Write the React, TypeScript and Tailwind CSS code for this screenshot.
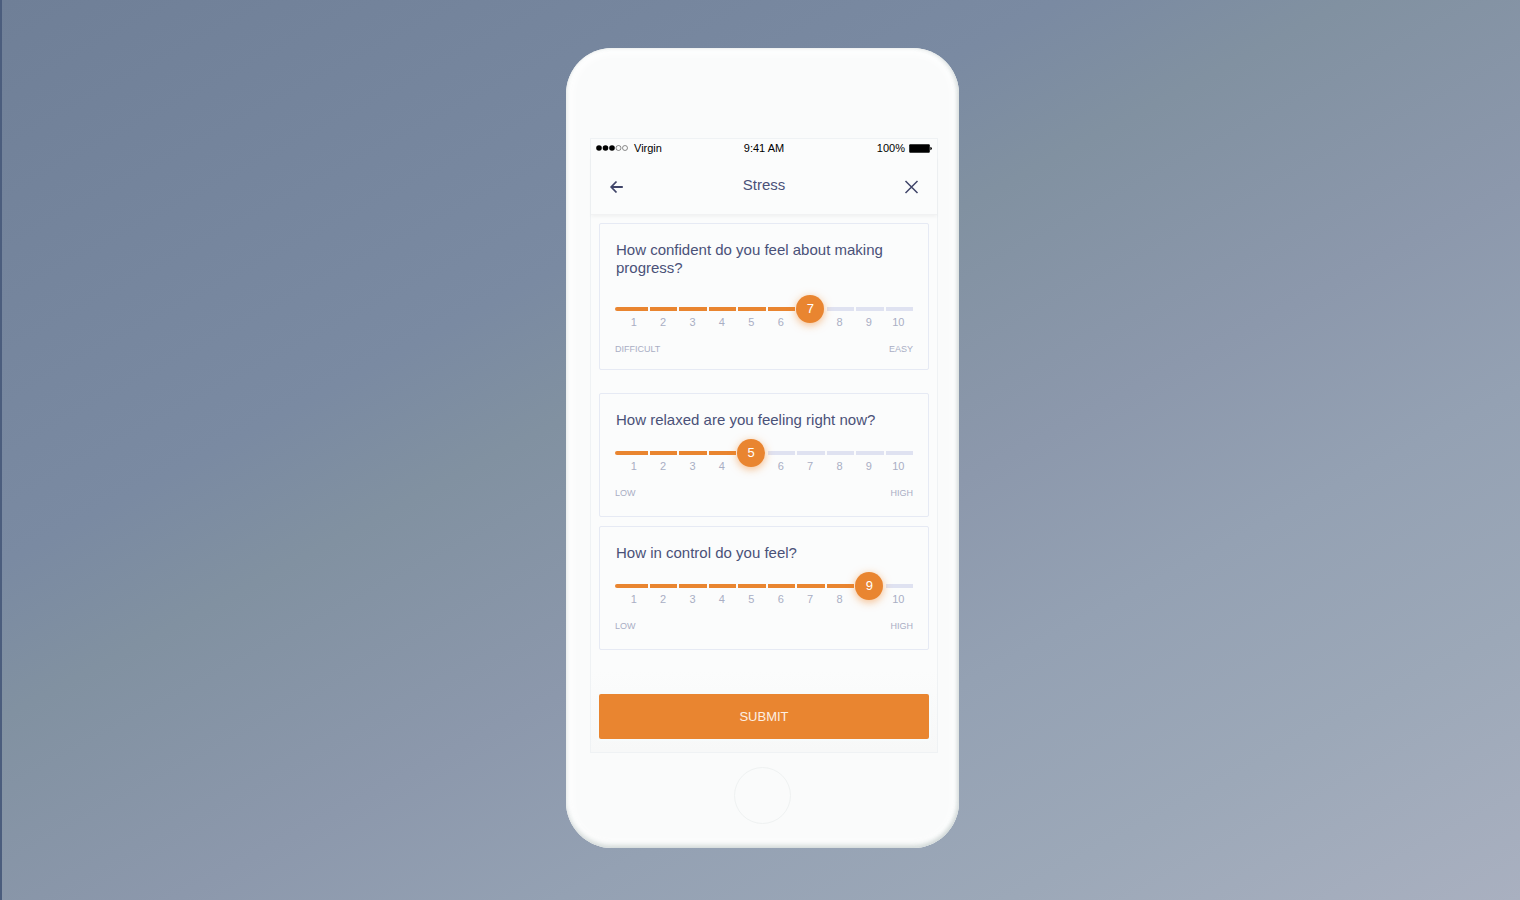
import React, { useState } from 'react';

interface Question {
  id: string;
  title: string;
  value: number;
  low: string;
  high: string;
  cardClass: string;
  trackClass: string;
}

const questions: Question[] = [
  {
    id: 'confident',
    title: 'How confident do you feel about making progress?',
    value: 7,
    low: 'Difficult',
    high: 'Easy',
    cardClass: 'pb-[14px]',
    trackClass: 'mt-[30px]',
  },
  {
    id: 'relaxed',
    title: 'How relaxed are you feeling right now?',
    value: 5,
    low: 'Low',
    high: 'High',
    cardClass: 'mt-[23px] pb-[17px]',
    trackClass: 'mt-[22px]',
  },
  {
    id: 'control',
    title: 'How in control do you feel?',
    value: 9,
    low: 'Low',
    high: 'High',
    cardClass: 'mt-[9px] pb-[17px]',
    trackClass: 'mt-[22px]',
  },
];

const steps = [1, 2, 3, 4, 5, 6, 7, 8, 9, 10];

const segmentColor = (step: number, value: number) => {
  if (step === value) return 'bg-transparent';
  return step < value ? 'bg-[#e98530]' : 'bg-[#dfe2f1]';
};

const QuestionCard: React.FC<{ question: Question }> = ({ question }) => {
  const [value, setValue] = useState(question.value);

  return (
    <div className={`rounded-[2px] border border-[#e6eaf4] px-[15px] pt-[17px] ${question.cardClass}`}>
      <label htmlFor={question.id} className="block px-px text-[15px] leading-[18px] text-[#4a5178]">
        {question.title}
      </label>

      {/* Segmented track */}
      <div className={`relative ${question.trackClass}`}>
        <div className="grid grid-cols-[33px_repeat(9,1fr)] gap-[2px] overflow-hidden rounded-l-full">
          {steps.map((step) => (
            <span key={step} className={`h-1 ${segmentColor(step, value)}`} />
          ))}
        </div>
        <div className="pointer-events-none absolute inset-y-0 right-[14px] left-[18px]">
          <span
            className="absolute top-1/2 flex size-7 -translate-x-1/2 -translate-y-1/2 items-center justify-center rounded-full bg-[#e98530] text-[13px] text-white shadow-[0_2px_8px_rgba(240,133,40,0.55)]"
            style={{ left: `${((value - 1) / 9) * 100}%` }}
          >
            {value}
          </span>
        </div>
        <input
          id={question.id}
          type="range"
          min={1}
          max={10}
          value={value}
          onChange={(e) => setValue(Number(e.target.value))}
          className="absolute top-1/2 right-0 left-1 h-7 -translate-y-1/2 cursor-pointer opacity-0"
        />
      </div>

      <div className="mt-[5px] grid grid-cols-10 pl-1 text-center text-[11px] leading-3 text-[#a9aec4]">
        {steps.map((step) => (
          <span key={step} className={step === value ? 'invisible' : ''}>
            {step}
          </span>
        ))}
      </div>
      <div className="mt-[15px] flex justify-between text-[9px] leading-3 text-[#a9aec4] uppercase">
        <span>{question.low}</span>
        <span>{question.high}</span>
      </div>
    </div>
  );
};

const StatusBar: React.FC = () => (
  <div className="grid grid-cols-3 items-center px-[5px] text-[11px] leading-[18px] text-black">
    <div className="flex items-center gap-[6px]">
      <svg width="32" height="6" viewBox="0 0 32 6">
        <circle cx="3" cy="3" r="2.8" />
        <circle cx="9.5" cy="3" r="2.8" />
        <circle cx="16" cy="3" r="2.8" />
        <circle cx="22.5" cy="3" r="2.5" fill="none" stroke="#444" strokeWidth="0.6" />
        <circle cx="29" cy="3" r="2.5" fill="none" stroke="#444" strokeWidth="0.6" />
      </svg>
      <span>Virgin</span>
    </div>
    <span className="text-center">9:41 AM</span>
    <div className="flex items-center justify-end gap-1">
      <span>100%</span>
      <svg width="23" height="9" viewBox="0 0 23 9">
        <rect x="0.2" y="0.2" width="20.6" height="8.6" rx="1" />
        <path d="M21.3 2.8 Q23 3.3 23 4.5 Q23 5.7 21.3 6.2 Z" />
      </svg>
    </div>
  </div>
);

const App: React.FC = () => {
  return (
    <div className="flex min-h-screen items-start justify-center border-l-2 border-[#4b5d7d] bg-[linear-gradient(152deg,#6f7f97_0%,#7a8aa2_33%,#8191a1_42%,#8c98ac_58%,#94a1b3_70%,#9ca8b8_84%,#a9b0c0_100%)] pt-12 pb-[52px] pl-[3px] font-['Liberation_Sans',Arial,sans-serif]">
      {/* Phone body */}
      <div className="w-full max-w-[393px] rounded-[46px] bg-[#fafbfb] px-[21px] pt-[90px] pb-6 shadow-[inset_0_-3px_5px_rgba(190,200,198,0.6),inset_-2px_0_4px_rgba(205,213,213,0.6),inset_0_0_8px_6px_#ffffff]">
        <div className="ml-[3px] border border-[#eff2f4] bg-[#fbfcfc]">
          <StatusBar />

          <header className="flex items-center justify-between border-b border-[#f1f2f3] px-[18px] pt-[17px] pb-[14px] text-[#3f4468] shadow-[0_2px_3px_rgba(0,0,0,0.04)]">
            <button type="button" aria-label="Back" className="flex h-[26px] w-4 items-center">
              <svg width="16" height="14" viewBox="0 0 16 14" fill="none" stroke="currentColor" strokeWidth="1.8">
                <path d="M7.5 1.5 L2.2 7 L7.5 12.5 M2.2 7 H13.8" />
              </svg>
            </button>
            <h1 className="pb-1 text-[15px] leading-[18px] text-[#4a5178]">Stress</h1>
            <button type="button" aria-label="Close" className="flex h-[26px] w-4 items-center">
              <svg width="16" height="14" viewBox="0 0 16 14" fill="none" stroke="currentColor" strokeWidth="1.5">
                <path d="M2.5 1 L14.5 13 M14.5 1 L2.5 13" />
              </svg>
            </button>
          </header>

          <form className="bg-linear-to-b from-transparent from-85% to-[#f7f8f8] px-2 pt-2 pb-[13px]" onSubmit={(e) => e.preventDefault()}>
            {questions.map((question) => (
              <QuestionCard key={question.id} question={question} />
            ))}
            <button
              type="submit"
              className="mt-11 block h-[45px] w-full rounded-[2px] bg-[#e98530] text-[13px] text-[#fdf0e4] uppercase shadow-[0_0_2px_2px_#f7fbfc]"
            >
              Submit
            </button>
          </form>
        </div>

        {/* Home button */}
        <button
          type="button"
          aria-label="Home"
          className="mx-auto mt-[14px] block size-[57px] rounded-full border border-[#eff2f2]"
        />
      </div>
    </div>
  );
};

export default App;
